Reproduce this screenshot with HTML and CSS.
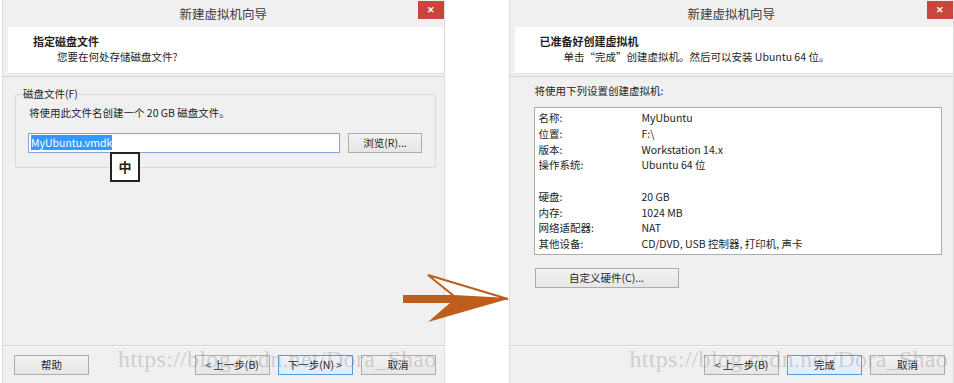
FILE: index.html
```html
<!DOCTYPE html>
<html lang="zh-CN">

<head>
    <meta charset="UTF-8">
    <meta name="viewport" content="width=device-width, initial-scale=1.0">
    <title>新建虚拟机向导</title>
    <link rel="stylesheet" href="styles.css">
</head>

<body>
    <!-- 第一步: 指定磁盘文件 -->
    <div class="wizard wizard-left">
        <div class="titlebar">
            <span></span>
            <span class="title">新建虚拟机向导</span>
            <span class="close">&#x2715;</span>
        </div>
        <div class="header">
            <h1>指定磁盘文件</h1>
            <p>您要在何处存储磁盘文件?</p>
        </div>
        <div class="content">
            <fieldset class="disk-box">
                <legend>磁盘文件(F)</legend>
                <p>将使用此文件名创建一个 20 GB 磁盘文件。</p>
                <div class="file-row">
                    <div class="file-input"><span class="selected">MyUbuntu.vmdk</span></div>
                    <button type="button" class="btn">浏览(R)...</button>
                </div>
                <div class="ime">中</div>
            </fieldset>
        </div>
        <div class="footer">
            <button type="button" class="btn">帮助</button>
            <span class="spacer"></span>
            <button type="button" class="btn">&lt; 上一步(B)</button>
            <button type="button" class="btn btn-default">下一步(N) &gt;</button>
            <button type="button" class="btn">取消</button>
        </div>
        <div class="watermark">https://blog.csdn.net/Dora_Shao</div>
    </div>

    <!-- 最后一步: 已准备好创建虚拟机 -->
    <div class="wizard wizard-right">
        <div class="titlebar">
            <span></span>
            <span class="title">新建虚拟机向导</span>
            <span class="close">&#x2715;</span>
        </div>
        <div class="header">
            <h1>已准备好创建虚拟机</h1>
            <p>单击“完成”创建虚拟机。然后可以安装 Ubuntu 64 位。</p>
        </div>
        <div class="content content-summary">
            <p>将使用下列设置创建虚拟机:</p>
            <div class="settings">
                <span>名称:</span><span>MyUbuntu</span>
                <span>位置:</span><span>F:\</span>
                <span>版本:</span><span>Workstation 14.x</span>
                <span>操作系统:</span><span>Ubuntu 64 位</span>
                <span class="blank"></span><span class="blank"></span>
                <span>硬盘:</span><span>20 GB</span>
                <span>内存:</span><span>1024 MB</span>
                <span>网络适配器:</span><span>NAT</span>
                <span>其他设备:</span><span>CD/DVD, USB 控制器, 打印机, 声卡</span>
            </div>
            <button type="button" class="btn btn-wide">自定义硬件(C)...</button>
        </div>
        <div class="footer">
            <span class="spacer"></span>
            <button type="button" class="btn">&lt; 上一步(B)</button>
            <button type="button" class="btn btn-default">完成</button>
            <button type="button" class="btn">取消</button>
        </div>
        <div class="watermark">https://blog.csdn.net/Dora_Shao</div>
    </div>

    <!-- 两个窗口之间的箭头 -->
    <svg class="arrow" width="112" height="54" viewBox="0 0 112 54">
        <rect x="3" y="23" width="50" height="8" fill="#bd5e1c"></rect>
        <polygon points="28,3 108,27 54,24" fill="#fff" stroke="#bd5e1c" stroke-width="2" stroke-linejoin="miter"></polygon>
        <polygon points="44,23 108,27 28,50 50,31" fill="#bd5e1c"></polygon>
    </svg>
</body>

</html>
```

FILE: styles.css
```css
body {
    font-family: "Noto Sans CJK SC", sans-serif;
    font-size: 10.5px;
    color: #1e1e1e;
    margin: 0;
    padding: 0;
    width: 954px;
    height: 383px;
    overflow: hidden;
    background-color: #fff;
    display: flex;
    position: relative;
}

.wizard {
    position: relative;
    height: 383px;
    background-color: #f0f0f0;
    border-left: 1px solid #dcdcdc;
    border-right: 1px solid #dcdcdc;
    display: flex;
    flex-direction: column;
    box-sizing: border-box;
}

.wizard-left {
    margin-left: 2px;
    width: 443px;
}

.wizard-right {
    margin-left: 64px;
    width: 446px;
}

.titlebar {
    height: 27px;
    display: grid;
    grid-template-columns: 1fr auto 1fr;
    align-items: start;
}

.title {
    font-size: 12.5px;
    line-height: 27px;
    color: #3c3c3c;
}

.close {
    justify-self: end;
    margin: 1px 0 0 0;
    width: 26px;
    height: 18px;
    background-color: #c9463d;
    color: #fff;
    font-size: 9px;
    font-weight: bold;
    line-height: 18px;
    text-align: center;
}

.header {
    height: 47px;
    margin: 0 0 0 5px;
    padding: 6px 0 0 25px;
    background-color: #fff;
    border-bottom: 1px solid #e4e4e4;
    box-sizing: border-box;
}

.header h1 {
    margin: 0;
    font-size: 11px;
    font-weight: bold;
    line-height: 16px;
}

.header p {
    margin: 0 0 0 24px;
    line-height: 15px;
}

.content {
    flex: 1;
    margin-top: 2px;
    border-top: 1px solid #d6d6d6;
}

.disk-box {
    position: relative;
    margin: 10px 8px 0 12px;
    padding: 4px 12px 14px 12px;
    border: 1px solid #dadada;
    border-radius: 2px;
}

.disk-box legend {
    padding: 0 1px;
    margin-left: -6px;
    line-height: 14px;
}

.disk-box p {
    margin: 0 0 0 1px;
    line-height: 15px;
}

.file-row {
    display: flex;
    align-items: center;
    margin-top: 13px;
}

.file-input {
    width: 312px;
    height: 20px;
    border: 1px solid #7ea7d8;
    background-color: #fff;
    box-sizing: border-box;
    padding: 2px 0 0 2px;
    line-height: 14px;
}

.selected {
    background-color: #3399ff;
    color: #fff;
}

.file-row .btn {
    margin-left: 8px;
    width: 74px;
}

.ime {
    position: absolute;
    left: 94px;
    top: 51px;
    width: 30px;
    height: 30px;
    border: 2px solid #222;
    background-color: #fff;
    box-sizing: border-box;
    font-size: 13px;
    font-weight: bold;
    line-height: 26px;
    text-align: center;
}

.btn {
    font-family: inherit;
    font-size: 10.5px;
    color: #1e1e1e;
    width: 75px;
    height: 20px;
    padding: 0;
    border: 1px solid #acacac;
    border-radius: 0;
    background: linear-gradient(#f2f2f2, #e6e6e6);
    line-height: 16px;
}

.btn-default {
    border-color: #5b9bd5;
    background: linear-gradient(#edf4fb, #dfecf9);
}

.btn-wide {
    width: 144px;
    margin: 13px 0 0 25px;
}

.footer {
    height: 38px;
    display: flex;
    align-items: flex-start;
    gap: 8px;
    padding: 9px 8px 0 11px;
    border-top: 1px solid #d6d6d6;
    box-shadow: inset 0 1px 0 #fbfbfb;
    box-sizing: border-box;
}

.spacer {
    flex: 1;
}

.content-summary > p {
    margin: 6px 0 0 25px;
    line-height: 16px;
}

.settings {
    display: grid;
    grid-template-columns: 103px 1fr;
    margin: 8px 11px 0 24px;
    padding: 2px 4px 3px 4px;
    height: 148px;
    box-sizing: border-box;
    border: 1px solid #adadad;
    background-color: #fff;
    line-height: 15.75px;
}

.blank {
    height: 15.75px;
}

.watermark {
    position: absolute;
    top: 346px;
    font-family: "Liberation Serif", serif;
    font-size: 24px;
    letter-spacing: 0.3px;
    color: rgba(120, 120, 120, 0.3);
    pointer-events: none;
    white-space: nowrap;
}

.wizard-left .watermark {
    left: 115px;
}

.wizard-right .watermark {
    left: 120px;
}

.arrow {
    position: absolute;
    left: 400px;
    top: 272px;
}
```
